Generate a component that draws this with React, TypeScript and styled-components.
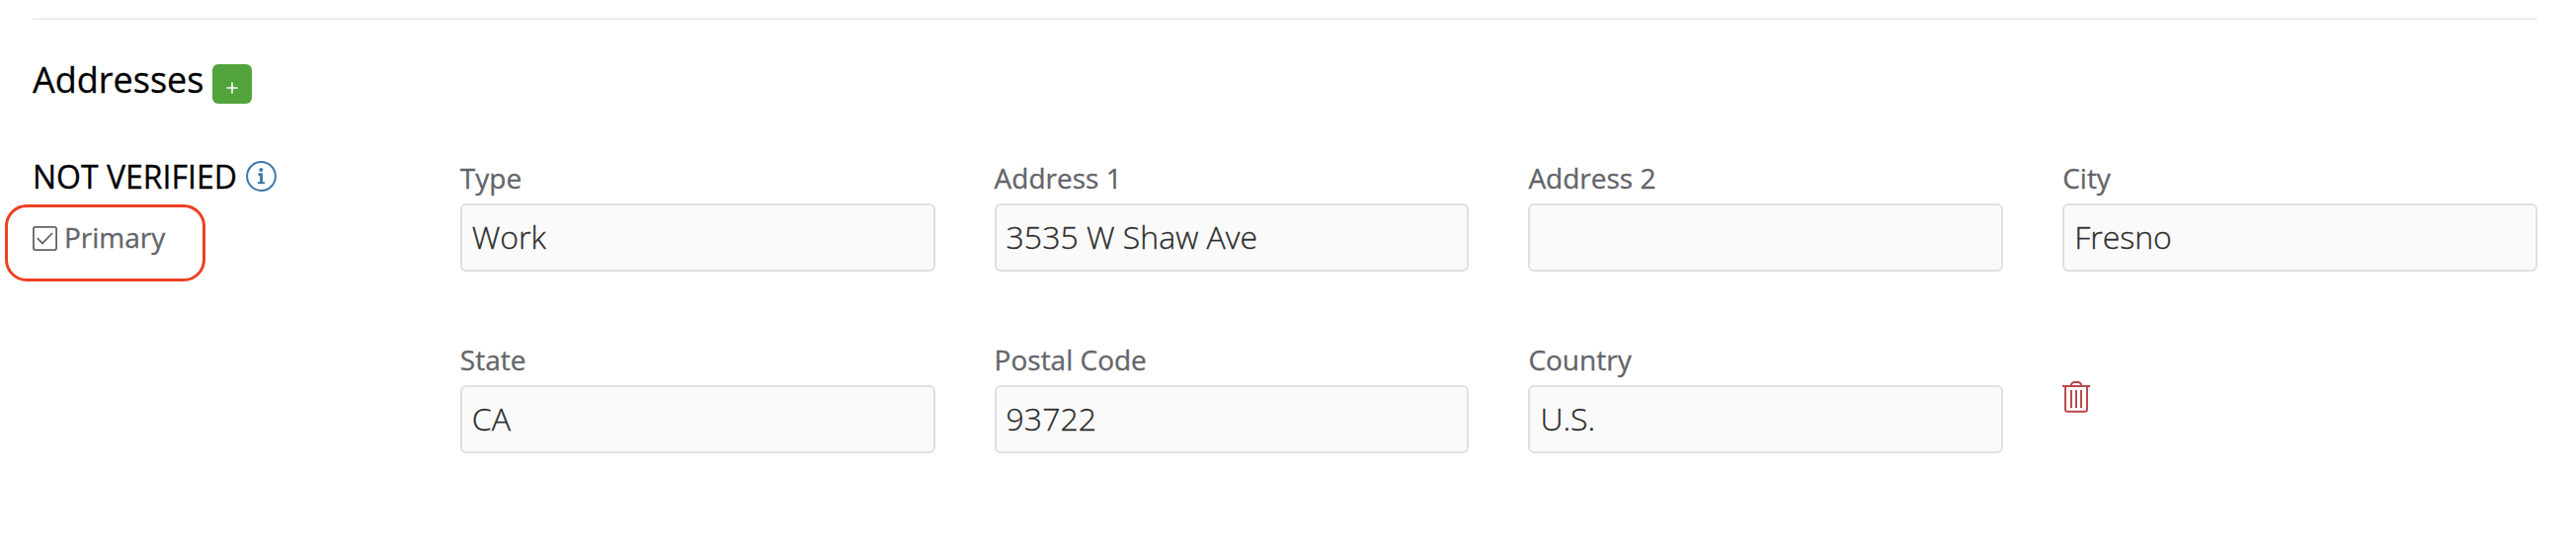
import React from "react";
import styled, { createGlobalStyle } from "styled-components";

const GlobalStyle = createGlobalStyle`
  * { box-sizing: border-box; }
  body {
    margin: 0;
    background: #fff;
    font-family: "Open Sans", sans-serif;
    -webkit-text-stroke: 0.3px currentColor;
  }
`;

const Section = styled.section`
  height: 564px;
  padding: 18px 39px 0 33px;
`;

const Divider = styled.hr`
  height: 2px;
  margin: 0;
  border: 0;
  background: #eeeeee;
`;

const Header = styled.header`
  display: flex;
  align-items: flex-start;
  gap: 9px;
  height: 60px;
  margin-top: 36px;
`;

const Title = styled.h2`
  margin: 0;
  color: #000;
  font-size: 36px;
  font-weight: 400;
  line-height: 50px;
`;

const AddButton = styled.button`
  display: flex;
  align-items: center;
  justify-content: center;
  width: 40px;
  height: 40px;
  margin: 9px 0 0;
  padding: 7px 0 0;
  border: 0;
  border-radius: 6px;
  background: #53a33d;
  color: #fff;
`;

const AddressRow = styled.div`
  display: grid;
  grid-template-columns: 432.8px 1fr;
  margin-top: 44px;
`;

const Status = styled.div`
  position: relative;
`;

const Verification = styled.div`
  display: flex;
  align-items: flex-start;
  gap: 9px;
  height: 40px;
  color: #000;
  font-size: 32px;
  line-height: 37px;
`;

const PrimaryOption = styled.label`
  display: flex;
  align-items: center;
  gap: 7px;
  height: 41px;
  margin-top: 21px;
  color: #63646a;
  font-size: 28px;
  line-height: 39px;
`;

const PrimaryText = styled.span`
  height: 41px;
`;

const Highlight = styled.div`
  position: absolute;
  top: 47px;
  left: -28px;
  width: 203px;
  height: 78px;
  border: 3px solid #ee4023;
  border-radius: 22px;
  pointer-events: none;
`;

const Fields = styled.div`
  display: grid;
  grid-template-columns: repeat(4, 1fr);
  column-gap: 60px;
  row-gap: 69px;
`;

const Field = styled.label`
  display: flex;
  flex-direction: column;
`;

const FieldLabel = styled.span`
  height: 46px;
  color: #63646a;
  font-size: 28px;
  line-height: 40px;
`;

const FieldInput = styled.input`
  width: 100%;
  height: 69px;
  padding: 0 10px 2px;
  border: 2px solid #e0e0e0;
  border-radius: 6px;
  background: #fafafa;
  color: #2c2c2c;
  font-family: inherit;
  font-size: 32px;
  font-weight: 300;
  outline: 0;
`;

const DeleteButton = styled.button`
  display: block;
  width: 28px;
  height: 32px;
  margin: 42px 0 0;
  padding: 0;
  border: 0;
  background: none;
  color: #b64543;
`;

const Icon = styled.svg`
  display: block;
  flex: none;
  fill: none;
  stroke: currentColor;
`;

const InfoIcon = styled(Icon)`
  margin-top: 3px;
  color: #3a78ac;
`;

const fields = [
  { label: "Type", value: "Work" },
  { label: "Address 1", value: "3535 W Shaw Ave" },
  { label: "Address 2", value: "" },
  { label: "City", value: "Fresno" },
  { label: "State", value: "CA" },
  { label: "Postal Code", value: "93722" },
  { label: "Country", value: "U.S." },
];

export default function App() {
  return (
    <>
      <GlobalStyle />
      <Section>
        <Divider />
        <Header>
          <Title>Addresses</Title>
          <AddButton aria-label="Add address">
            <Icon width="12" height="12" viewBox="0 0 12 12" strokeWidth="1.6">
              <path d="M6 0.5v11M0.5 6h11" />
            </Icon>
          </AddButton>
        </Header>
        <AddressRow>
          <Status>
            <Verification>
              NOT VERIFIED
              <InfoIcon width="31" height="31" viewBox="0 0 31 31" strokeWidth="2">
                <circle cx="15.5" cy="15.5" r="14.4" />
                <circle cx="15.3" cy="9" r="2" fill="currentColor" stroke="none" />
                <path d="M12.5 13.6h3v8.6" strokeWidth="2.8" />
                <path d="M12 22.2h7" strokeWidth="2" />
              </InfoIcon>
            </Verification>
            <PrimaryOption>
              <Icon width="25" height="25" viewBox="0 0 25 25" strokeWidth="1.8">
                <rect x="0.9" y="0.9" width="23.2" height="23.2" rx="2" />
                <path d="M4.8 12.2l5.2 5.2L20 7" />
              </Icon>
              <PrimaryText>Primary</PrimaryText>
            </PrimaryOption>
            <Highlight />
          </Status>
          <Fields>
            {fields.map(({ label, value }) => (
              <Field key={label}>
                <FieldLabel>{label}</FieldLabel>
                <FieldInput value={value} readOnly />
              </Field>
            ))}
            <DeleteButton aria-label="Delete address">
              <Icon width="28" height="32" viewBox="0 0 28 32" strokeWidth="1.9">
                <path d="M0 5h28M3 5v23.5a2.2 2.2 0 0 0 2.2 2.2h17.6a2.2 2.2 0 0 0 2.2-2.2V5M8.5 5c.4-2.5 2-4 4-4h3c2 0 3.6 1.5 4 4M9 9v18M14 9v18M19 9v18" />
              </Icon>
            </DeleteButton>
          </Fields>
        </AddressRow>
      </Section>
    </>
  );
}
